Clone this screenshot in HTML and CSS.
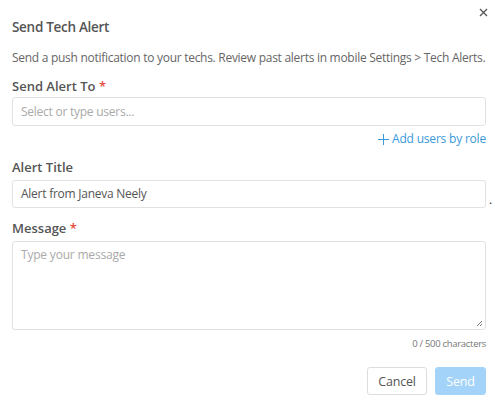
FILE: index.html
```html
<!DOCTYPE html>
<html>
<head>
<meta charset="utf-8">
<link rel="stylesheet" href="styles.css">
</head>
<body>
<div class="modal">
  <button class="close" aria-label="Close">
    <svg width="9" height="9" viewBox="0 0 9 9"><path d="M1 1L8 8M8 1L1 8" stroke="#555" stroke-width="1.3" fill="none"/></svg>
  </button>
  <h1 class="title">Send Tech Alert</h1>
  <p class="desc">Send a push notification to your techs. Review past alerts in mobile Settings &gt; Tech Alerts.</p>

  <div class="field">
    <label class="label">Send Alert To <span class="req">*</span></label>
    <div class="input input-users placeholder">Select or type users...</div>
    <div class="addrole"><span class="plus">+</span> Add users by role</div>
  </div>

  <div class="field">
    <label class="label">Alert Title</label>
    <div class="input-row">
      <div class="input">Alert from Janeva Neely</div>
      <span class="dot">.</span>
    </div>
  </div>

  <div class="field">
    <label class="label">Message <span class="req">*</span></label>
    <div class="textarea placeholder">Type your message
      <svg class="grip" width="7" height="7" viewBox="0 0 7 7"><path d="M6 1L1 6M6 4L4 6" stroke="#777" stroke-width="1" fill="none"/></svg>
    </div>
    <div class="count">0 / 500 characters</div>
  </div>

  <div class="actions">
    <button class="btn cancel">Cancel</button>
    <button class="btn send">Send</button>
  </div>
</div>
</body>
</html>
```
FILE: styles.css
```css
html, body {
  margin: 0;
  padding: 0;
  background: #fff;
}
body {
  font-family: "Open Sans", "Liberation Sans", sans-serif;
  color: #555;
}
.modal {
  position: relative;
  width: 474px;
  padding: 17px 9px 0 12px;
}
.close {
  position: absolute;
  top: 8px;
  right: 7px;
  border: 0;
  background: none;
  padding: 0;
  width: 9px;
  height: 9px;
  display: flex;
}
.title {
  margin: 0;
  font-size: 13.5px;
  font-weight: 600;
  letter-spacing: -0.3px;
  line-height: 20px;
  color: #555;
}
.desc {
  margin: 13px 0 0;
  font-size: 12px;
  letter-spacing: -0.28px;
  line-height: 16px;
  color: #666;
  white-space: nowrap;
}
.field {
  margin-top: 12px;
}
.label {
  display: block;
  font-size: 13px;
  font-weight: 600;
  letter-spacing: 0;
  line-height: 16px;
  color: #555;
}
.req {
  color: #e74c3c;
}
.input {
  box-sizing: border-box;
  margin-top: 5px;
  height: 28px;
  border: 1px solid #e2e2e2;
  border-radius: 3px;
  padding: 0 8px;
  font-size: 12px;
  letter-spacing: -0.25px;
  line-height: 26px;
  color: #555;
  width: 474px;
}
.input-users {
  margin-top: 3px;
  height: 29px;
  line-height: 27px;
}
.placeholder {
  color: #aaa;
}
.addrole {
  display: flex;
  justify-content: flex-end;
  align-items: center;
  gap: 3px;
  margin-top: 5px;
  font-size: 12px;
  letter-spacing: -0.2px;
  line-height: 16px;
  color: #3a9ad9;
}
.plus {
  display: block;
  width: 11px;
  height: 16px;
  position: relative;
  color: transparent;
  overflow: hidden;
}
.plus::before,
.plus::after {
  content: "";
  position: absolute;
  background: #3a9ad9;
}
.plus::before {
  left: 0;
  right: 0;
  top: 7.5px;
  height: 1.2px;
}
.plus::after {
  top: 2.5px;
  bottom: 2.5px;
  left: 5px;
  width: 1.2px;
}
.input-row {
  display: flex;
  align-items: flex-end;
}
.input-row .input {
  flex: none;
}
.dot {
  font-size: 12px;
  line-height: 12px;
  margin-left: 3px;
  margin-bottom: 2px;
  color: #333;
}
.textarea {
  position: relative;
  box-sizing: border-box;
  margin-top: 5px;
  width: 474px;
  height: 89px;
  border: 1px solid #e2e2e2;
  border-radius: 3px;
  padding: 5px 8px;
  font-size: 12px;
  letter-spacing: -0.2px;
  line-height: 16px;
}
.grip {
  position: absolute;
  right: 2px;
  bottom: 2px;
}
.count {
  text-align: right;
  margin-top: 7px;
  font-size: 9.5px;
  letter-spacing: -0.3px;
  line-height: 14px;
  color: #777;
}
.actions {
  display: flex;
  justify-content: flex-end;
  gap: 8px;
  margin-top: 16px;
}
.btn {
  font-family: inherit;
  height: 28px;
  border-radius: 3px;
  font-size: 12.5px;
  letter-spacing: -0.2px;
  padding: 0;
}
.cancel {
  width: 60px;
  background: #fff;
  border: 1px solid #ddd;
  color: #555;
}
.send {
  width: 51px;
  background: #a3d3f8;
  border: 1px solid #a3d3f8;
  color: #fff;
}
```
